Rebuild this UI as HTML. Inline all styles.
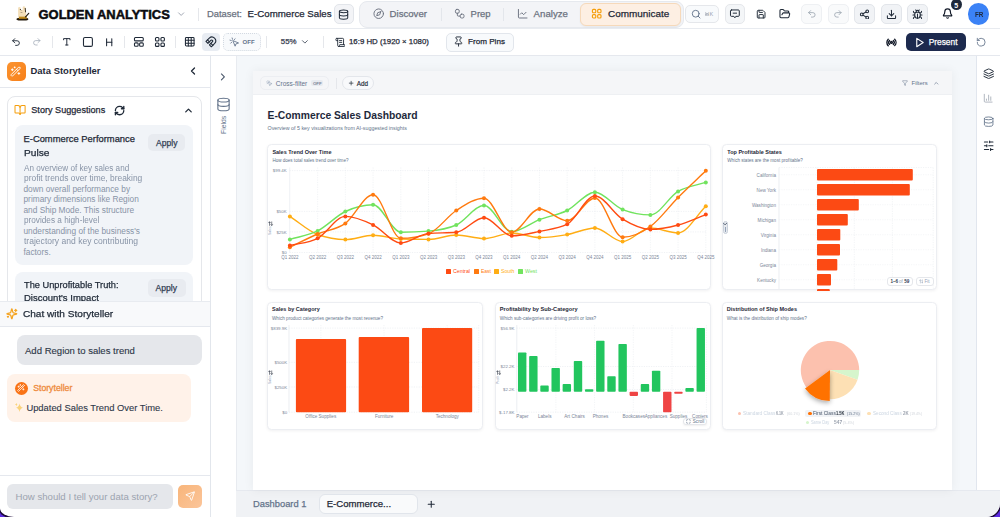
<!DOCTYPE html>
<html><head><meta charset="utf-8"><title>Golden Analytics</title>
<style>
html,body{margin:0;padding:0;}
body{width:1000px;height:517px;overflow:hidden;background:#5b2ae0;font-family:"Liberation Sans",sans-serif;position:relative;}
#app{position:absolute;left:0;top:0;width:1000px;height:517px;background:#fff;border-radius:0 0 14px 14px / 0 0 14px 9px;overflow:hidden;box-shadow:0 0 0 1.6px #1d0b3a;}
.t{position:absolute;white-space:nowrap;line-height:1;transform-origin:0 0;}
.r{position:absolute;}
</style></head><body><div id="app">
<div class="r" style="left:0.00px;top:0.00px;width:1000.00px;height:28.50px;background:#ffffff;border-radius:0px;"></div>
<div class="r" style="left:0.00px;top:28.00px;width:1000.00px;height:1.00px;background:#e8ebf0;border-radius:0px;"></div>
<div class="r" style="left:0.00px;top:55.00px;width:1000.00px;height:1.00px;background:#e5e8ee;border-radius:0px;"></div>
<div class="r" style="left:237.00px;top:56.00px;width:739.00px;height:434.00px;background:#f4f7fa;border-radius:0px;"></div>
<div class="r" style="left:975.80px;top:56.00px;width:1.40px;height:434.00px;background:#e1e6ee;border-radius:0px;"></div>
<div class="r" style="left:977.00px;top:56.00px;width:23.00px;height:434.00px;background:#ffffff;border-radius:0px;"></div>
<div class="r" style="left:210.00px;top:56.00px;width:1.00px;height:461.00px;background:#e2e6ec;border-radius:0px;"></div>
<div class="r" style="left:236.00px;top:56.00px;width:1.00px;height:461.00px;background:#e8ebf0;border-radius:0px;"></div>
<div class="r" style="left:236.00px;top:490.00px;width:764.00px;height:27.00px;background:#f0f2f5;border-radius:0px;"></div>
<div class="r" style="left:236.00px;top:490.00px;width:764.00px;height:1.00px;background:#e6e9ef;border-radius:0px;"></div>
<svg class="r" style="left:14.00px;top:4.00px;" width="17" height="18" viewBox="0 0 17 18" fill="none">
<g transform="translate(-14,-4)">
<path d="M16.3 19.2 Q16.5 18.2 18 18 L27 18 Q28.5 18.2 28.4 19.4 Q27.5 20.4 26 20.4 L18.5 20.4 Q16.8 20.3 16.3 19.2 Z" fill="#241a0c"/>
<rect x="18.8" y="16.2" width="8" height="2.6" fill="#c08a1c"/>
<path d="M18.1 16.6 L18.1 8.2 Q18.1 7.1 19.3 7.1 Q20.6 7.1 20.7 8.3 L20.8 10 L22.7 10 L22.7 7.3 Q22.8 6.3 24 6.3 Q25.3 6.4 25.5 7.6 L25.9 12.5 Q26.3 13.6 26 15 L25.6 16.6 Z" fill="#f4dfb9"/>
<path d="M20 9 L21 10.3" stroke="#2a2116" stroke-width="0.9"/>
<path d="M25.2 8 L25.6 12.3" stroke="#2a2116" stroke-width="0.9"/>
<path d="M28.7 13.3 L25.5 16.9" stroke="#2a2116" stroke-width="1.2" stroke-linecap="round"/>
<path d="M20.6 12.5 L22.4 12.5" stroke="#8a7a60" stroke-width="0.6"/>
</g>
</svg>
<div class="t" style="left:38.50px;top:8.97px;font-size:12.95686177910521px;font-weight:700;color:#0b0b0f;-webkit-text-stroke:0.5px #0b0b0f;">GOLDEN ANALYTICS</div>
<svg class="r" style="left:175.86px;top:8.86px;" width="10.29" height="10.29" viewBox="0 0 24 24" fill="none" stroke="#9ca3af" stroke-width="2.2" stroke-linecap="round" stroke-linejoin="round"><path d="m6 9 6 6 6-6"/></svg>
<div class="r" style="left:198.30px;top:8.00px;width:1.00px;height:12.50px;background:#e5e7eb;border-radius:0px;"></div>
<div class="t" style="left:207.00px;top:9.37px;font-size:9.39873284941048px;color:#6b7280;-webkit-text-stroke:0.25px #6b7280;">Dataset:</div>
<div class="t" style="left:247.60px;top:9.24px;font-size:9.690153030876548px;color:#1f2937;-webkit-text-stroke:0.25px #1f2937;">E-Commerce Sales</div>
<div class="r" style="left:333.60px;top:4.00px;width:20.00px;height:20.40px;background:#f3f4f7;border:1px solid #e2e5ea;box-sizing:border-box;border-radius:5px;"></div>
<svg class="r" style="left:338.09px;top:8.64px;" width="11.12" height="11.12" viewBox="0 0 24 24" fill="none" stroke="#1f2937" stroke-width="2.2" stroke-linecap="round" stroke-linejoin="round"><ellipse cx="12" cy="5" rx="9" ry="3"/><path d="M3 5V19A9 3 0 0 0 21 19V5"/><path d="M3 12A9 3 0 0 0 21 12"/></svg>
<div class="r" style="left:359.00px;top:1.00px;width:325.00px;height:26.50px;background:#f3f4f7;border:1px solid #e6e9ee;box-sizing:border-box;border-radius:8px;"></div>
<svg class="r" style="left:373.29px;top:8.49px;" width="11.43" height="11.43" viewBox="0 0 24 24" fill="none" stroke="#6b7280" stroke-width="2" stroke-linecap="round" stroke-linejoin="round"><circle cx="12" cy="12" r="10"/><polygon points="16.24 7.76 14.12 14.12 7.76 16.24 9.88 9.88 16.24 7.76"/></svg>
<div class="t" style="left:389.60px;top:9.27px;font-size:9.615554573574899px;color:#6b7280;-webkit-text-stroke:0.25px #6b7280;">Discover</div>
<div class="r" style="left:441.00px;top:8.00px;width:1.00px;height:12.50px;background:#e3e6eb;border-radius:0px;"></div>
<svg class="r" style="left:454.29px;top:8.49px;" width="11.43" height="11.43" viewBox="0 0 24 24" fill="none" stroke="#6b7280" stroke-width="2" stroke-linecap="round" stroke-linejoin="round"><rect width="8" height="8" x="3" y="3" rx="3"/><path d="M7 11v4a2 2 0 0 0 2 2h4"/><rect width="8" height="8" x="13" y="13" rx="3"/></svg>
<div class="t" style="left:470.60px;top:9.34px;font-size:9.468856339695222px;color:#6b7280;-webkit-text-stroke:0.25px #6b7280;">Prep</div>
<div class="r" style="left:503.40px;top:8.00px;width:1.00px;height:12.50px;background:#e3e6eb;border-radius:0px;"></div>
<svg class="r" style="left:517.29px;top:8.44px;" width="11.43" height="11.43" viewBox="0 0 24 24" fill="none" stroke="#6b7280" stroke-width="2" stroke-linecap="round" stroke-linejoin="round"><path d="M3 3v16a2 2 0 0 0 2 2h16"/><path d="m19 9-5 5-4-4-3 3"/></svg>
<div class="t" style="left:533.60px;top:9.25px;font-size:9.669711876317637px;color:#6b7280;-webkit-text-stroke:0.25px #6b7280;">Analyze</div>
<div class="r" style="left:580.40px;top:3.00px;width:100.60px;height:22.60px;background:#fdefe3;border:1px solid #f6d9ba;box-sizing:border-box;border-radius:6px;box-shadow:0 1px 2px rgba(0,0,0,0.05);"></div>
<svg class="r" style="left:591.29px;top:8.49px;" width="11.43" height="11.43" viewBox="0 0 24 24" fill="none" stroke="#f59e0b" stroke-width="2.4" stroke-linecap="round" stroke-linejoin="round"><rect width="7" height="7" x="3" y="3" rx="2"/><rect width="7" height="7" x="14" y="3" rx="2"/><rect width="7" height="7" x="14" y="14" rx="2"/><rect width="7" height="7" x="3" y="14" rx="2"/></svg>
<div class="t" style="left:608.00px;top:9.12px;font-size:9.953646242306036px;color:#1f2937;-webkit-text-stroke:0.25px #1f2937;">Communicate</div>
<div class="r" style="left:685.00px;top:5.00px;width:33.70px;height:18.40px;background:#f8fafc;border:1px solid #e5e7eb;box-sizing:border-box;border-radius:5px;"></div>
<svg class="r" style="left:690.51px;top:9.26px;" width="10.29" height="10.29" viewBox="0 0 24 24" fill="none" stroke="#64748b" stroke-width="2.2" stroke-linecap="round" stroke-linejoin="round"><circle cx="11" cy="11" r="8"/><path d="m21 21-4.3-4.3"/></svg>
<svg class="r" style="left:705.00px;top:11.60px;" width="4.4" height="4.6" viewBox="0 0 4.4 4.6" fill="none"><path d="M1.4 1.5 H3 M1.4 3.1 H3 M1.4 1.5 V3.1 M3 1.5 V3.1 M1.4 1.5 A0.8 0.8 0 1 0 0.6 2.3 H1.4 M3 1.5 A0.8 0.8 0 1 1 3.8 2.3 H3 M1.4 3.1 A0.8 0.8 0 1 1 0.6 2.3 M3 3.1 A0.8 0.8 0 1 0 3.8 2.3" stroke="#9ca3af" stroke-width="0.6"/></svg>
<div class="t" style="left:709.60px;top:11.68px;font-size:5.6px;color:#9ca3af;">K</div>
<div class="r" style="left:724.60px;top:3.60px;width:20.50px;height:20.70px;background:#f4f6f8;border:1px solid #e5e7eb;box-sizing:border-box;border-radius:5px;"></div>
<svg class="r" style="left:729.26px;top:8.21px;" width="11.77" height="11.77" viewBox="0 0 24 24" fill="none" stroke="#1f2937" stroke-width="2" stroke-linecap="round" stroke-linejoin="round"><path d="M5 4h14a2 2 0 0 1 2 2v9a2 2 0 0 1-2 2h-5l-2 3-2-3H5a2 2 0 0 1-2-2V6a2 2 0 0 1 2-2z"/><path d="M8.5 10.5h7"/></svg>
<svg class="r" style="left:756.36px;top:9.26px;" width="10.29" height="10.29" viewBox="0 0 24 24" fill="none" stroke="#1f2937" stroke-width="2.2" stroke-linecap="round" stroke-linejoin="round"><path d="M15.2 3a2 2 0 0 1 1.4.6l3.8 3.8a2 2 0 0 1 .6 1.4V19a2 2 0 0 1-2 2H5a2 2 0 0 1-2-2V5a2 2 0 0 1 2-2z"/><path d="M17 21v-7a1 1 0 0 0-1-1H8a1 1 0 0 0-1 1v7"/><path d="M7 3v4a1 1 0 0 0 1 1h7"/></svg>
<svg class="r" style="left:779.07px;top:8.47px;" width="11.66" height="11.66" viewBox="0 0 24 24" fill="none" stroke="#1f2937" stroke-width="2.2" stroke-linecap="round" stroke-linejoin="round"><path d="m6 14 1.5-2.9A2 2 0 0 1 9.24 10H20a2 2 0 0 1 1.94 2.5l-1.54 6a2 2 0 0 1-1.95 1.5H4a2 2 0 0 1-2-2V5a2 2 0 0 1 2-2h3.9a2 2 0 0 1 1.69.9l.81 1.2a2 2 0 0 0 1.67.9H18a2 2 0 0 1 2 2v2"/></svg>
<div class="r" style="left:801.40px;top:3.60px;width:20.60px;height:20.70px;background:#f9fafb;border:1px solid #eef0f3;box-sizing:border-box;border-radius:5px;"></div>
<svg class="r" style="left:806.89px;top:9.14px;" width="9.71" height="9.71" viewBox="0 0 24 24" fill="none" stroke="#9aa3af" stroke-width="2" stroke-linecap="round" stroke-linejoin="round"><path d="M9 14 4 9l5-5"/><path d="M4 9h10.5a5.5 5.5 0 0 1 5.5 5.5a5.5 5.5 0 0 1-5.5 5.5H11"/></svg>
<div class="r" style="left:827.80px;top:3.60px;width:20.90px;height:20.70px;background:#f9fafb;border:1px solid #eef0f3;box-sizing:border-box;border-radius:5px;"></div>
<svg class="r" style="left:833.39px;top:9.14px;" width="9.71" height="9.71" viewBox="0 0 24 24" fill="none" stroke="#9aa3af" stroke-width="2" stroke-linecap="round" stroke-linejoin="round"><path d="m15 14 5-5-5-5"/><path d="M20 9H9.5A5.5 5.5 0 0 0 4 14.5A5.5 5.5 0 0 0 9.5 20H13"/></svg>
<div class="r" style="left:854.20px;top:3.75px;width:21.00px;height:20.25px;background:#f1f3f6;border:1px solid #e2e5ea;box-sizing:border-box;border-radius:5px;"></div>
<svg class="r" style="left:859.21px;top:8.51px;" width="10.97" height="10.97" viewBox="0 0 24 24" fill="none" stroke="#1f2937" stroke-width="2.2" stroke-linecap="round" stroke-linejoin="round"><circle cx="18" cy="5" r="3"/><circle cx="6" cy="12" r="3"/><circle cx="18" cy="19" r="3"/><line x1="8.59" x2="15.42" y1="13.51" y2="17.49"/><line x1="15.41" x2="8.59" y1="6.51" y2="10.49"/></svg>
<div class="r" style="left:880.70px;top:3.75px;width:21.00px;height:20.25px;background:#f1f3f6;border:1px solid #e2e5ea;box-sizing:border-box;border-radius:5px;"></div>
<svg class="r" style="left:885.71px;top:8.51px;" width="10.97" height="10.97" viewBox="0 0 24 24" fill="none" stroke="#1f2937" stroke-width="2.2" stroke-linecap="round" stroke-linejoin="round"><path d="M21 15v4a2 2 0 0 1-2 2H5a2 2 0 0 1-2-2v-4"/><polyline points="7 10 12 15 17 10"/><line x1="12" x2="12" y1="15" y2="3"/></svg>
<div class="r" style="left:907.40px;top:3.75px;width:20.60px;height:20.25px;background:#f1f3f6;border:1px solid #e2e5ea;box-sizing:border-box;border-radius:5px;"></div>
<svg class="r" style="left:912.21px;top:8.51px;" width="10.97" height="10.97" viewBox="0 0 24 24" fill="none" stroke="#1f2937" stroke-width="2.2" stroke-linecap="round" stroke-linejoin="round"><path d="m8 2 1.88 1.88"/><path d="M14.12 3.88 16 2"/><path d="M9 7.13v-1a3.003 3.003 0 1 1 6 0v1"/><path d="M12 20c-3.3 0-6-2.7-6-6v-3a4 4 0 0 1 4-4h4a4 4 0 0 1 4 4v3c0 3.3-2.7 6-6 6"/><path d="M12 20v-9"/><path d="M6.53 9C4.6 8.8 3 7.1 3 5"/><path d="M6 13H2"/><path d="M3 21c0-2.1 1.7-3.9 3.8-4"/><path d="M20.97 5c0 2.1-1.6 3.8-3.5 4"/><path d="M22 13h-4"/><path d="M17.2 17c2.1.1 3.8 1.9 3.8 4"/></svg>
<svg class="r" style="left:941.50px;top:8.40px;" width="11.2" height="11.2" viewBox="0 0 24 24" fill="none" stroke="#111827" stroke-width="2.5" stroke-linecap="round" stroke-linejoin="round"><path d="M10.268 21a2 2 0 0 0 3.464 0"/><path d="M3.262 15.326A1 1 0 0 0 4 17h16a1 1 0 0 0 .74-1.673C19.41 13.956 18 12.499 18 8A6 6 0 0 0 6 8c0 4.499-1.411 5.956-2.738 7.326"/></svg>
<div class="r" style="left:950.7px;top:-0.8px;width:11px;height:11px;border-radius:50%;background:#1e293b;"></div>
<div class="t" style="left:954.25px;top:1.65px;font-size:7px;font-weight:700;color:#ffffff;">5</div>
<div class="r" style="left:968.2px;top:3.45px;width:21.2px;height:21.2px;border-radius:50%;background:#3b82f6;"></div>
<div class="t" style="left:974.60px;top:10.54px;font-size:7.9px;font-weight:700;color:#1e293b;transform:scaleX(0.7977);">FR</div>
<svg class="r" style="left:10.97px;top:37.07px;" width="10.06" height="10.06" viewBox="0 0 24 24" fill="none" stroke="#1f2937" stroke-width="2.2" stroke-linecap="round" stroke-linejoin="round"><path d="M9 14 4 9l5-5"/><path d="M4 9h10.5a5.5 5.5 0 0 1 5.5 5.5a5.5 5.5 0 0 1-5.5 5.5H11"/></svg>
<svg class="r" style="left:32.00px;top:37.30px;" width="9.6" height="9.6" viewBox="0 0 24 24" fill="none" stroke="#a3acb9" stroke-width="2" stroke-linecap="round" stroke-linejoin="round"><path d="m15 14 5-5-5-5"/><path d="M20 9H9.5A5.5 5.5 0 0 0 4 14.5A5.5 5.5 0 0 0 9.5 20H13"/></svg>
<div class="r" style="left:51.50px;top:35.80px;width:1.00px;height:12.00px;background:#e5e7eb;border-radius:0px;"></div>
<svg class="r" style="left:62.00px;top:37.10px;" width="9.6" height="9.6" viewBox="0 0 24 24" fill="none" stroke="#1f2937" stroke-width="2.4" stroke-linecap="round" stroke-linejoin="round"><polyline points="4 7 4 4 20 4 20 7"/><line x1="9" x2="15" y1="20" y2="20"/><line x1="12" x2="12" y1="4" y2="20"/></svg>
<svg class="r" style="left:82.01px;top:36.16px;" width="11.88" height="11.88" viewBox="0 0 24 24" fill="none" stroke="#1f2937" stroke-width="2.2" stroke-linecap="round" stroke-linejoin="round"><rect width="18" height="18" x="3" y="3" rx="3"/></svg>
<svg class="r" style="left:104.10px;top:36.90px;" width="10.4" height="10.4" viewBox="0 0 24 24" fill="none" stroke="#1f2937" stroke-width="2.4" stroke-linecap="round" stroke-linejoin="round"><path d="M6 12h12"/><path d="M6 20V4"/><path d="M18 20V4"/></svg>
<div class="r" style="left:123.50px;top:35.80px;width:1.00px;height:12.00px;background:#e5e7eb;border-radius:0px;"></div>
<svg class="r" style="left:133.22px;top:36.22px;" width="11.76" height="11.76" viewBox="0 0 24 24" fill="none" stroke="#1f2937" stroke-width="2.2" stroke-linecap="round" stroke-linejoin="round"><rect width="18" height="7" x="3" y="3" rx="2"/><rect width="7.5" height="7" x="3" y="14" rx="2"/><rect width="7.5" height="7" x="13.5" y="14" rx="2"/></svg>
<svg class="r" style="left:154.41px;top:36.16px;" width="11.88" height="11.88" viewBox="0 0 24 24" fill="none" stroke="#1f2937" stroke-width="2.2" stroke-linecap="round" stroke-linejoin="round"><rect width="7" height="7" x="3" y="3" rx="2"/><rect width="7" height="7" x="14" y="3" rx="2"/><rect width="7" height="7" x="14" y="14" rx="2"/><rect width="7" height="7" x="3" y="14" rx="2"/></svg>
<div class="r" style="left:175.00px;top:35.80px;width:1.00px;height:12.00px;background:#e5e7eb;border-radius:0px;"></div>
<svg class="r" style="left:184.44px;top:36.34px;" width="11.52" height="11.52" viewBox="0 0 24 24" fill="none" stroke="#1f2937" stroke-width="2.2" stroke-linecap="round" stroke-linejoin="round"><rect width="18" height="18" x="3" y="3" rx="2"/><path d="M3 9h18"/><path d="M3 15h18"/><path d="M9 3v18"/><path d="M15 3v18"/></svg>
<div class="r" style="left:202.20px;top:32.80px;width:18.00px;height:18.60px;background:#e8ecf2;border-radius:4px;"></div>
<svg class="r" style="left:205.46px;top:36.26px;" width="11.77" height="11.77" viewBox="0 0 24 24" fill="none" stroke="#1f2937" stroke-width="2.2" stroke-linecap="round" stroke-linejoin="round"><path d="m6 15-4-4 6.75-6.77a7.79 7.79 0 0 1 11 11L13 22l-4-4 6.39-6.36a2.14 2.14 0 0 0-3-3L6 15"/><path d="m5 8 4 4"/><path d="m12 15 4 4"/></svg>
<div class="r" style="left:223.20px;top:32.80px;width:37.40px;height:18.20px;background:#f8fafc;border:1px dotted #d3d9e1;box-sizing:border-box;border-radius:5px;"></div>
<svg class="r" style="left:228.94px;top:36.74px;" width="10.51" height="10.51" viewBox="0 0 24 24" fill="none" stroke="#64748b" stroke-width="2" stroke-linecap="round" stroke-linejoin="round"><path d="m9 9 5 12 1.8-5.2L21 14Z"/><path d="M7.2 2.2 8 5.1"/><path d="m5.1 8-2.9-.8"/><path d="M14 4.1 12 6"/><path d="m6 12-1.9 2"/></svg>
<div class="t" style="left:242.60px;top:39.30px;font-size:6.001875586120663px;font-weight:700;color:#64748b;">OFF</div>
<div class="r" style="left:266.40px;top:35.80px;width:1.00px;height:12.00px;background:#e5e7eb;border-radius:0px;"></div>
<div class="t" style="left:280.80px;top:38.45px;font-size:7.894449215395425px;color:#374151;-webkit-text-stroke:0.25px #374151;">55%</div>
<svg class="r" style="left:299.96px;top:36.96px;" width="9.77" height="9.77" viewBox="0 0 24 24" fill="none" stroke="#4b5563" stroke-width="2.2" stroke-linecap="round" stroke-linejoin="round"><path d="m6 9 6 6 6-6"/></svg>
<div class="r" style="left:323.10px;top:35.80px;width:1.00px;height:12.00px;background:#e5e7eb;border-radius:0px;"></div>
<svg class="r" style="left:334.58px;top:36.60px;" width="10.8" height="10.8" viewBox="0 0 24 24" fill="none" stroke="#1f2937" stroke-width="2" stroke-linecap="round" stroke-linejoin="round"><path d="M15 12h-5"/><path d="M15 8h-5"/><path d="M19 17V5a2 2 0 0 0-2-2H4"/><path d="M8 21h12a2 2 0 0 0 2-2v-1a1 1 0 0 0-1-1H11a1 1 0 0 0-1 1v1a2 2 0 1 1-4 0V5a2 2 0 1 0-4 0v2a1 1 0 0 0 1 1h3"/></svg>
<div class="t" style="left:349.00px;top:38.47px;font-size:7.842776833172495px;color:#1f2937;-webkit-text-stroke:0.25px #1f2937;">16:9 HD (1920 × 1080)</div>
<div class="r" style="left:445.50px;top:32.50px;width:68.25px;height:19.00px;background:#f8fafc;border:1px solid #e2e6ec;box-sizing:border-box;border-radius:5px;"></div>
<svg class="r" style="left:453.31px;top:36.46px;" width="11.09" height="11.09" viewBox="0 0 24 24" fill="none" stroke="#1f2937" stroke-width="2" stroke-linecap="round" stroke-linejoin="round"><path d="M12 17v5"/><path d="M9 10.76a2 2 0 0 1-1.11 1.79l-1.78.9A2 2 0 0 0 5 15.24V16a1 1 0 0 0 1 1h12a1 1 0 0 0 1-1v-.76a2 2 0 0 0-1.11-1.79l-1.78-.9A2 2 0 0 1 15 10.76V7a1 1 0 0 1 1-1 2 2 0 0 0 0-4H8a2 2 0 0 0 0 4 1 1 0 0 1 1 1z"/></svg>
<div class="t" style="left:468.00px;top:38.35px;font-size:8.121270320323754px;color:#1f2937;-webkit-text-stroke:0.25px #1f2937;">From Pins</div>
<svg class="r" style="left:886.45px;top:36.60px;" width="10.91" height="10.91" viewBox="0 0 24 24" fill="none" stroke="#111827" stroke-width="3" stroke-linecap="round" stroke-linejoin="round"><path d="M4.9 19.1C1 15.2 1 8.8 4.9 4.9"/><path d="M7.8 16.2c-2.3-2.3-2.3-6.1 0-8.5"/><circle cx="12" cy="12" r="2"/><path d="M16.2 7.8c2.3 2.3 2.3 6.1 0 8.5"/><path d="M19.1 4.9C23 8.8 23 15.1 19.1 19"/></svg>
<div class="r" style="left:906.25px;top:33.00px;width:59.35px;height:18.10px;background:#1d2a4e;border-radius:5px;"></div>
<svg class="r" style="left:914.27px;top:36.85px;" width="11.05" height="11.05" viewBox="0 0 24 24" fill="none" stroke="#ffffff" stroke-width="2.4" stroke-linecap="round" stroke-linejoin="round"><polygon points="6 3 20 12 6 21 6 3"/></svg>
<div class="t" style="left:928.75px;top:38.25px;font-size:8.342779415098617px;color:#ffffff;-webkit-text-stroke:0.25px #ffffff;">Present</div>
<svg class="r" style="left:976.25px;top:37.05px;" width="10.4" height="10.4" viewBox="0 0 24 24" fill="none" stroke="#64748b" stroke-width="2" stroke-linecap="round" stroke-linejoin="round"><path d="M3 12a9 9 0 1 0 9-9 9.75 9.75 0 0 0-6.74 2.74L3 8"/><path d="M3 3v5h5"/></svg>
<div class="r" style="left:0.00px;top:86.50px;width:210.00px;height:1.00px;background:#e5e8ee;border-radius:0px;"></div>
<div class="r" style="left:6.5px;top:61.8px;width:19px;height:19px;border-radius:5px;background:linear-gradient(135deg,#fb9330,#f7801a);"></div>
<svg class="r" style="left:10.30px;top:65.60px;" width="11.2" height="11.2" viewBox="0 0 24 24" fill="none" stroke="#ffffff" stroke-width="2" stroke-linecap="round" stroke-linejoin="round"><path d="m21.64 3.64-1.28-1.28a1.21 1.21 0 0 0-1.72 0L2.36 18.64a1.21 1.21 0 0 0 0 1.72l1.28 1.280a1.2 1.2 0 0 0 1.72 0L21.64 5.36a1.2 1.2 0 0 0 0-1.72"/><path d="m14 7 3 3"/><path d="M5 6v4"/><path d="M19 14v4"/><path d="M10 2v2"/><path d="M7 8H3"/><path d="M21 16h-4"/><path d="M11 3H9"/></svg>
<div class="t" style="left:30.50px;top:66.04px;font-size:9.470657872484356px;font-weight:700;color:#1f2937;">Data Storyteller</div>
<svg class="r" style="left:187.00px;top:65.20px;" width="12.0" height="12.0" viewBox="0 0 24 24" fill="none" stroke="#1f2937" stroke-width="2.6" stroke-linecap="round" stroke-linejoin="round"><path d="m15 18-6-6 6-6"/></svg>
<div class="r" style="left:0;top:87.5px;width:210px;height:214px;overflow:hidden;">
<div class="r" style="left:0;top:-87.5px;width:210px;height:400px;">
<div class="r" style="left:6.50px;top:95.50px;width:195.00px;height:324.50px;background:#ffffff;border:1px solid #e5e7eb;box-sizing:border-box;border-radius:8px;"></div>
<svg class="r" style="left:14.24px;top:104.44px;" width="12.11" height="12.11" viewBox="0 0 24 24" fill="none" stroke="#f59e0b" stroke-width="2" stroke-linecap="round" stroke-linejoin="round"><path d="M12 7v14"/><path d="M3 18a1 1 0 0 1-1-1V4a1 1 0 0 1 1-1h5a4 4 0 0 1 4 4 4 4 0 0 1 4-4h5a1 1 0 0 1 1 1v13a1 1 0 0 1-1 1h-6a3 3 0 0 0-3 3 3 3 0 0 0-3-3z"/></svg>
<div class="t" style="left:31.30px;top:106.30px;font-size:9.118564442219569px;color:#1f2937;-webkit-text-stroke:0.25px #1f2937;">Story Suggestions</div>
<svg class="r" style="left:114.30px;top:104.90px;" width="11.2" height="11.2" viewBox="0 0 24 24" fill="none" stroke="#1f2937" stroke-width="2.9" stroke-linecap="round" stroke-linejoin="round"><path d="M3 12a9 9 0 0 1 9-9 9.75 9.75 0 0 1 6.74 2.74L21 8"/><path d="M21 3v5h-5"/><path d="M21 12a9 9 0 0 1-9 9 9.75 9.75 0 0 1-6.74-2.74L3 16"/><path d="M8 16H3v5"/></svg>
<svg class="r" style="left:182.51px;top:104.71px;" width="10.97" height="10.97" viewBox="0 0 24 24" fill="none" stroke="#1f2937" stroke-width="2.8" stroke-linecap="round" stroke-linejoin="round"><path d="m18 15-6-6-6 6"/></svg>
<div class="r" style="left:15.00px;top:125.00px;width:178.20px;height:139.50px;background:#f1f4f8;border-radius:8px;"></div>
<div class="t" style="left:23.50px;top:134.47px;font-size:9.4px;color:#1f2937;-webkit-text-stroke:0.25px #1f2937;">E-Commerce Performance</div>
<div class="t" style="left:23.50px;top:147.67px;font-size:9.4px;color:#1f2937;transform:scaleX(1.0845);-webkit-text-stroke:0.25px #1f2937;">Pulse</div>
<div class="r" style="left:148.30px;top:133.80px;width:36.60px;height:17.20px;background:#e8ebf0;border-radius:5px;"></div>
<div class="t" style="left:156.00px;top:138.53px;font-size:8.595165219563995px;color:#334155;-webkit-text-stroke:0.25px #334155;">Apply</div>
<div class="t" style="left:23.50px;top:163.66px;font-size:8.3px;color:#8793a6;transform:scaleX(0.9787);">An overview of key sales and</div>
<div class="t" style="left:23.50px;top:174.19px;font-size:8.3px;color:#8793a6;transform:scaleX(1.0137);">profit trends over time, breaking</div>
<div class="t" style="left:23.50px;top:184.70px;font-size:8.3px;color:#8793a6;">down overall performance by</div>
<div class="t" style="left:23.50px;top:195.22px;font-size:8.3px;color:#8793a6;">primary dimensions like Region</div>
<div class="t" style="left:23.50px;top:205.75px;font-size:8.3px;color:#8793a6;">and Ship Mode. This structure</div>
<div class="t" style="left:23.50px;top:216.26px;font-size:8.3px;color:#8793a6;transform:scaleX(0.9892);">provides a high-level</div>
<div class="t" style="left:23.50px;top:226.78px;font-size:8.3px;color:#8793a6;">understanding of the business's</div>
<div class="t" style="left:23.50px;top:237.31px;font-size:8.3px;color:#8793a6;transform:scaleX(1.0297);">trajectory and key contributing</div>
<div class="t" style="left:23.50px;top:247.82px;font-size:8.3px;color:#8793a6;">factors.</div>
<div class="r" style="left:15.00px;top:271.60px;width:178.20px;height:128.40px;background:#f1f4f8;border-radius:8px;"></div>
<div class="t" style="left:23.60px;top:279.77px;font-size:9.4px;color:#1f2937;transform:scaleX(0.9862);-webkit-text-stroke:0.25px #1f2937;">The Unprofitable Truth:</div>
<div class="t" style="left:23.60px;top:292.87px;font-size:9.4px;color:#1f2937;transform:scaleX(1.0151);-webkit-text-stroke:0.25px #1f2937;">Discount's Impact</div>
<div class="r" style="left:147.70px;top:279.00px;width:37.90px;height:18.00px;background:#e8ebf0;border-radius:5px;"></div>
<div class="t" style="left:155.50px;top:284.13px;font-size:8.595165219563995px;color:#334155;-webkit-text-stroke:0.25px #334155;">Apply</div>
</div></div>
<div class="r" style="left:0.00px;top:301.40px;width:210.00px;height:24.60px;background:#f8f9fb;border-radius:0px;"></div>
<div class="r" style="left:0.00px;top:301.40px;width:210.00px;height:0.80px;background:#e8ebf0;border-radius:0px;"></div>
<div class="r" style="left:0.00px;top:325.50px;width:210.00px;height:1.00px;background:#e5e8ee;border-radius:0px;"></div>
<svg class="r" style="left:6.17px;top:308.12px;" width="11.66" height="11.66" viewBox="0 0 24 24" fill="none" stroke="#f5a524" stroke-width="2.6" stroke-linecap="round" stroke-linejoin="round"><path d="M9.937 15.5A2 2 0 0 0 8.5 14.063l-6.135-1.582a.5.5 0 0 1 0-.962L8.5 9.936A2 2 0 0 0 9.937 8.5l1.582-6.135a.5.5 0 0 1 .963 0L14.063 8.5A2 2 0 0 0 15.5 9.937l6.135 1.581a.5.5 0 0 1 0 .964L15.5 14.063a2 2 0 0 0-1.437 1.437l-1.582 6.135a.5.5 0 0 1-.963 0z"/><path d="M20 3v4"/><path d="M22 5h-4"/><path d="M4 17v2"/><path d="M5 18H3"/></svg>
<div class="t" style="left:22.50px;top:309.18px;font-size:9.6px;color:#1f2937;transform:scaleX(1.0478);-webkit-text-stroke:0.25px #1f2937;">Chat with Storyteller</div>
<div class="r" style="left:17.10px;top:334.70px;width:184.80px;height:30.70px;background:#e5e7eb;border-radius:8px;"></div>
<div class="t" style="left:25.00px;top:345.50px;font-size:9.559762092284295px;color:#2d3748;-webkit-text-stroke:0.12px #2d3748;">Add Region to sales trend</div>
<div class="r" style="left:6.80px;top:373.70px;width:184.20px;height:48.80px;background:#fff2e9;border-radius:8px;"></div>
<div class="r" style="left:14.7px;top:381.7px;width:13px;height:13px;border-radius:50%;background:#f97316;"></div>
<svg class="r" style="left:17.20px;top:384.20px;" width="8.0" height="8.0" viewBox="0 0 24 24" fill="none" stroke="#ffffff" stroke-width="2.2" stroke-linecap="round" stroke-linejoin="round"><path d="m21.64 3.64-1.28-1.28a1.21 1.21 0 0 0-1.72 0L2.36 18.64a1.21 1.21 0 0 0 0 1.72l1.28 1.280a1.2 1.2 0 0 0 1.72 0L21.64 5.36a1.2 1.2 0 0 0 0-1.72"/><path d="m14 7 3 3"/><path d="M5 6v4"/><path d="M19 14v4"/><path d="M10 2v2"/><path d="M7 8H3"/><path d="M21 16h-4"/><path d="M11 3H9"/></svg>
<div class="t" style="left:33.20px;top:384.08px;font-size:8.70869202999167px;color:#ee8a3c;-webkit-text-stroke:0.3px #ee8a3c;">Storyteller</div>
<svg class="r" style="left:14.00px;top:402.00px;" width="10" height="11" viewBox="0 0 10 11" fill="none"><path d="M5.5 1.5 Q6 5 9 5.8 Q6 6.6 5.5 10 Q5 6.6 2 5.8 Q5 5 5.5 1.5Z" fill="#f9d27a"/><path d="M2.3 0.8 Q2.5 2.2 3.6 2.5 Q2.5 2.8 2.3 4.2 Q2.1 2.8 1 2.5 Q2.1 2.2 2.3 0.8Z" fill="#f9d27a"/></svg>
<div class="t" style="left:26.40px;top:403.37px;font-size:9.40833100843402px;color:#2d3748;-webkit-text-stroke:0.1px #2d3748;">Updated Sales Trend Over Time.</div>
<div class="r" style="left:0.00px;top:474.50px;width:210.00px;height:1.00px;background:#e5e8ee;border-radius:0px;"></div>
<div class="r" style="left:6.75px;top:484.25px;width:165.75px;height:24.50px;background:#e5e7eb;border-radius:6px;"></div>
<div class="t" style="left:15.50px;top:491.98px;font-size:9.604836237964891px;color:#9ca3af;">How should I tell your data story?</div>
<div class="r" style="left:178px;top:484.5px;width:24px;height:23.8px;border-radius:5px;background:linear-gradient(135deg,#f8b57a,#fbc59a);"></div>
<svg class="r" style="left:184.86px;top:490.86px;" width="10.29" height="10.29" viewBox="0 0 24 24" fill="none" stroke="#ffffff" stroke-width="2" stroke-linecap="round" stroke-linejoin="round"><path d="M14.536 21.686a.5.5 0 0 0 .937-.024l6.5-19a.496.496 0 0 0-.635-.635l-19 6.5a.5.5 0 0 0-.024.937l7.93 3.18a2 2 0 0 1 1.112 1.11z"/><path d="m21.854 2.147-10.94 10.939"/></svg>
<svg class="r" style="left:217.45px;top:70.95px;" width="11.8" height="11.8" viewBox="0 0 24 24" fill="none" stroke="#475569" stroke-width="2.2" stroke-linecap="round" stroke-linejoin="round"><path d="m9 18 6-6-6-6"/></svg>
<svg class="r" style="left:215.98px;top:96.73px;" width="15.03" height="15.03" viewBox="0 0 24 24" fill="none" stroke="#64748b" stroke-width="1.8" stroke-linecap="round" stroke-linejoin="round"><ellipse cx="12" cy="5" rx="9" ry="3"/><path d="M3 5V19A9 3 0 0 0 21 19V5"/><path d="M3 12A9 3 0 0 0 21 12"/></svg>
<div class="t" style="left:220.8px;top:134px;font-size:6.8px;color:#64748b;transform:rotate(-90deg) scaleX(1.0);transform-origin:0 0;">Fields</div>
<svg class="r" style="left:982.99px;top:68.39px;" width="11.43" height="11.43" viewBox="0 0 24 24" fill="none" stroke="#1f2937" stroke-width="2" stroke-linecap="round" stroke-linejoin="round"><path d="m12.83 2.18a2 2 0 0 0-1.66 0L2.6 6.08a1 1 0 0 0 0 1.83l8.58 3.91a2 2 0 0 0 1.66 0l8.58-3.9a1 1 0 0 0 0-1.83Z"/><path d="m22 17.65-9.17 4.16a2 2 0 0 1-1.66 0L2 17.65"/><path d="m22 12.65-9.17 4.16a2 2 0 0 1-1.66 0L2 12.65"/></svg>
<svg class="r" style="left:982.95px;top:92.55px;" width="10.4" height="10.4" viewBox="0 0 24 24" fill="none" stroke="#9ca3af" stroke-width="1.8" stroke-linecap="round" stroke-linejoin="round"><path d="M3 3v16a2 2 0 0 0 2 2h16"/><path d="M18 17V9"/><path d="M13 17V5"/><path d="M8 17v-3"/></svg>
<svg class="r" style="left:982.57px;top:116.22px;" width="11.37" height="11.37" viewBox="0 0 24 24" fill="none" stroke="#64748b" stroke-width="1.8" stroke-linecap="round" stroke-linejoin="round"><ellipse cx="12" cy="5" rx="9" ry="3"/><path d="M3 5V19A9 3 0 0 0 21 19V5"/><path d="M3 12A9 3 0 0 0 21 12"/></svg>
<svg class="r" style="left:982.75px;top:140.15px;" width="11.4" height="11.4" viewBox="0 0 24 24" fill="none" stroke="#1f2937" stroke-width="2.2" stroke-linecap="round" stroke-linejoin="round"><line x1="21" x2="14" y1="4" y2="4"/><line x1="10" x2="3" y1="4" y2="4"/><line x1="21" x2="12" y1="12" y2="12"/><line x1="8" x2="3" y1="12" y2="12"/><line x1="21" x2="16" y1="20" y2="20"/><line x1="12" x2="3" y1="20" y2="20"/><line x1="14" x2="14" y1="2" y2="6"/><line x1="8" x2="8" y1="10" y2="14"/><line x1="16" x2="16" y1="18" y2="22"/></svg>
<div class="r" style="left:252.60px;top:71.00px;width:699.40px;height:419.00px;background:#ffffff;border-radius:0px;box-shadow:0 0 10px rgba(15,23,42,0.06);"></div>
<div class="r" style="left:252.60px;top:71.00px;width:699.40px;height:23.50px;background:#f5f6f8;border-radius:0px;"></div>
<div class="r" style="left:252.60px;top:94.00px;width:699.40px;height:0.80px;background:#eef0f3;border-radius:0px;"></div>
<div class="r" style="left:260.20px;top:76.20px;width:69.30px;height:13.50px;background:#f5f6f8;border:1px solid #eceef2;box-sizing:border-box;border-radius:5px;"></div>
<svg class="r" style="left:266.09px;top:79.74px;" width="6.51" height="6.51" viewBox="0 0 24 24" fill="none" stroke="#94a3b8" stroke-width="2.2" stroke-linecap="round" stroke-linejoin="round"><path d="m9 9 5 12 1.8-5.2L21 14Z"/><path d="M7.2 2.2 8 5.1"/><path d="m5.1 8-2.9-.8"/><path d="M14 4.1 12 6"/><path d="m6 12-1.9 2"/></svg>
<div class="t" style="left:275.80px;top:80.57px;font-size:6.517311608961303px;color:#64748b;">Cross-filter</div>
<div class="r" style="left:311.20px;top:80.00px;width:12.30px;height:6.20px;background:#e8ebf0;border-radius:2px;"></div>
<div class="t" style="left:312.90px;top:81.72px;font-size:4.40137542982182px;font-weight:700;color:#7b8698;">OFF</div>
<div class="r" style="left:335.50px;top:78.00px;width:0.80px;height:10.50px;background:#e5e7eb;border-radius:0px;"></div>
<div class="r" style="left:342.20px;top:75.50px;width:31.90px;height:14.20px;background:#f8f9fb;border:1px solid #e3e6eb;box-sizing:border-box;border-radius:7.5px;"></div>
<svg class="r" style="left:347.95px;top:79.55px;" width="6.3" height="6.3" viewBox="0 0 24 24" fill="none" stroke="#1f2937" stroke-width="2.6" stroke-linecap="round" stroke-linejoin="round"><path d="M5 12h14"/><path d="M12 5v14"/></svg>
<div class="t" style="left:356.70px;top:80.64px;font-size:6.351102134012471px;color:#1f2937;-webkit-text-stroke:0.15px #1f2937;">Add</div>
<svg class="r" style="left:902.03px;top:80.03px;" width="5.94" height="5.94" viewBox="0 0 24 24" fill="none" stroke="#64748b" stroke-width="2" stroke-linecap="round" stroke-linejoin="round"><path d="M10 20a1 1 0 0 0 .553.895l2 1A1 1 0 0 0 14 21v-7a2 2 0 0 1 .517-1.341L21.74 4.67A1 1 0 0 0 21 3H3a1 1 0 0 0-.742 1.67l7.225 7.989A2 2 0 0 1 10 14z"/></svg>
<div class="t" style="left:911.60px;top:80.72px;font-size:5.951437919752024px;color:#64748b;">Filters</div>
<svg class="r" style="left:933.14px;top:79.74px;" width="6.51" height="6.51" viewBox="0 0 24 24" fill="none" stroke="#64748b" stroke-width="2.4" stroke-linecap="round" stroke-linejoin="round"><path d="m18 15-6-6-6 6"/></svg>
<div class="t" style="left:267.50px;top:110.95px;font-size:10.322469872407098px;font-weight:700;color:#1e293b;">E-Commerce Sales Dashboard</div>
<div class="t" style="left:267.50px;top:125.90px;font-size:5.3254550652816155px;color:#64748b;">Overview of 5 key visualizations from AI-suggested insights</div>
<div class="r" style="left:267.20px;top:144.40px;width:443.40px;height:145.20px;background:#ffffff;border:1px solid #eceef2;box-sizing:border-box;border-radius:4.5px;box-shadow:0 1px 3px rgba(15,23,42,0.06);"></div>
<div class="t" style="left:272.40px;top:150.13px;font-size:5.499782261576426px;font-weight:700;color:#1f2937;">Sales Trend Over Time</div>
<div class="t" style="left:272.40px;top:159.44px;font-size:4.566817349721672px;color:#64748b;">How does total sales trend over time?</div>
<svg class="r" style="left:268px;top:165px" width="442" height="91" viewBox="268 165 442 91" fill="none"><line x1="289.5" y1="170.6" x2="706" y2="170.6" stroke="#e6e9ee" stroke-width="0.6" stroke-dasharray="1.2 1.2"/><line x1="289.5" y1="211.4" x2="706" y2="211.4" stroke="#e6e9ee" stroke-width="0.6" stroke-dasharray="1.2 1.2"/><line x1="289.5" y1="231.9" x2="706" y2="231.9" stroke="#e6e9ee" stroke-width="0.6" stroke-dasharray="1.2 1.2"/><line x1="289.5" y1="252.5" x2="706" y2="252.5" stroke="#e6e9ee" stroke-width="0.6" stroke-dasharray="1.2 1.2"/><line x1="317.63" y1="167.5" x2="317.63" y2="252.5" stroke="#e9ecf0" stroke-width="0.6" stroke-dasharray="1.2 1.2"/><line x1="345.35" y1="167.5" x2="345.35" y2="252.5" stroke="#e9ecf0" stroke-width="0.6" stroke-dasharray="1.2 1.2"/><line x1="373.08" y1="167.5" x2="373.08" y2="252.5" stroke="#e9ecf0" stroke-width="0.6" stroke-dasharray="1.2 1.2"/><line x1="400.81" y1="167.5" x2="400.81" y2="252.5" stroke="#e9ecf0" stroke-width="0.6" stroke-dasharray="1.2 1.2"/><line x1="428.53" y1="167.5" x2="428.53" y2="252.5" stroke="#e9ecf0" stroke-width="0.6" stroke-dasharray="1.2 1.2"/><line x1="456.26" y1="167.5" x2="456.26" y2="252.5" stroke="#e9ecf0" stroke-width="0.6" stroke-dasharray="1.2 1.2"/><line x1="483.99" y1="167.5" x2="483.99" y2="252.5" stroke="#e9ecf0" stroke-width="0.6" stroke-dasharray="1.2 1.2"/><line x1="511.72" y1="167.5" x2="511.72" y2="252.5" stroke="#e9ecf0" stroke-width="0.6" stroke-dasharray="1.2 1.2"/><line x1="539.44" y1="167.5" x2="539.44" y2="252.5" stroke="#e9ecf0" stroke-width="0.6" stroke-dasharray="1.2 1.2"/><line x1="567.17" y1="167.5" x2="567.17" y2="252.5" stroke="#e9ecf0" stroke-width="0.6" stroke-dasharray="1.2 1.2"/><line x1="594.90" y1="167.5" x2="594.90" y2="252.5" stroke="#e9ecf0" stroke-width="0.6" stroke-dasharray="1.2 1.2"/><line x1="622.62" y1="167.5" x2="622.62" y2="252.5" stroke="#e9ecf0" stroke-width="0.6" stroke-dasharray="1.2 1.2"/><line x1="650.35" y1="167.5" x2="650.35" y2="252.5" stroke="#e9ecf0" stroke-width="0.6" stroke-dasharray="1.2 1.2"/><line x1="678.08" y1="167.5" x2="678.08" y2="252.5" stroke="#e9ecf0" stroke-width="0.6" stroke-dasharray="1.2 1.2"/><line x1="705.81" y1="167.5" x2="705.81" y2="252.5" stroke="#e9ecf0" stroke-width="0.6" stroke-dasharray="1.2 1.2"/><line x1="289.7" y1="167.5" x2="289.7" y2="252.5" stroke="#e8ebf0" stroke-width="0.7"/><path d="M289.90,216.40C299.14,222.43 308.38,231.10 317.63,234.50C326.87,237.90 336.11,239.60 345.35,239.60C354.60,239.60 363.84,235.30 373.08,235.30C382.32,235.30 391.57,238.73 400.81,239.00C410.05,239.27 419.29,239.40 428.53,239.40C437.78,239.40 447.02,235.00 456.26,235.00C465.50,235.00 474.75,238.60 483.99,238.60C493.23,238.60 502.47,233.00 511.72,233.00C520.96,233.00 530.20,237.50 539.44,237.50C548.69,237.50 557.93,236.18 567.17,234.60C576.41,233.02 585.65,228.00 594.90,228.00C604.14,228.00 613.38,241.60 622.62,241.60C631.87,241.60 641.11,228.00 650.35,228.00C659.59,228.00 668.84,232.90 678.08,232.90C687.32,232.90 696.56,215.10 705.81,206.20" stroke="#ffad14" stroke-width="1.4"/><circle cx="289.90" cy="216.40" r="2" fill="#ffad14"/><circle cx="317.63" cy="234.50" r="2" fill="#ffad14"/><circle cx="345.35" cy="239.60" r="2" fill="#ffad14"/><circle cx="373.08" cy="235.30" r="2" fill="#ffad14"/><circle cx="400.81" cy="239.00" r="2" fill="#ffad14"/><circle cx="428.53" cy="239.40" r="2" fill="#ffad14"/><circle cx="456.26" cy="235.00" r="2" fill="#ffad14"/><circle cx="483.99" cy="238.60" r="2" fill="#ffad14"/><circle cx="511.72" cy="233.00" r="2" fill="#ffad14"/><circle cx="539.44" cy="237.50" r="2" fill="#ffad14"/><circle cx="567.17" cy="234.60" r="2" fill="#ffad14"/><circle cx="594.90" cy="228.00" r="2" fill="#ffad14"/><circle cx="622.62" cy="241.60" r="2" fill="#ffad14"/><circle cx="650.35" cy="228.00" r="2" fill="#ffad14"/><circle cx="678.08" cy="232.90" r="2" fill="#ffad14"/><circle cx="705.81" cy="206.20" r="2" fill="#ffad14"/><path d="M289.90,239.40C299.14,236.57 308.38,235.55 317.63,230.90C326.87,226.25 336.11,215.87 345.35,211.50C354.60,207.13 363.84,204.70 373.08,204.70C382.32,204.70 391.57,232.20 400.81,232.20C410.05,232.20 419.29,231.83 428.53,231.10C437.78,230.37 447.02,229.07 456.26,225.00C465.50,220.93 474.75,205.40 483.99,205.40C493.23,205.40 502.47,231.70 511.72,231.70C520.96,231.70 530.20,223.23 539.44,219.70C548.69,216.17 557.93,215.08 567.17,210.50C576.41,205.92 585.65,192.20 594.90,192.20C604.14,192.20 613.38,206.07 622.62,209.60C631.87,213.13 641.11,214.90 650.35,214.90C659.59,214.90 668.84,196.82 678.08,191.40C687.32,185.98 696.56,185.40 705.81,182.40" stroke="#71e35e" stroke-width="1.4"/><circle cx="289.90" cy="239.40" r="2" fill="#71e35e"/><circle cx="317.63" cy="230.90" r="2" fill="#71e35e"/><circle cx="345.35" cy="211.50" r="2" fill="#71e35e"/><circle cx="373.08" cy="204.70" r="2" fill="#71e35e"/><circle cx="400.81" cy="232.20" r="2" fill="#71e35e"/><circle cx="428.53" cy="231.10" r="2" fill="#71e35e"/><circle cx="456.26" cy="225.00" r="2" fill="#71e35e"/><circle cx="483.99" cy="205.40" r="2" fill="#71e35e"/><circle cx="511.72" cy="231.70" r="2" fill="#71e35e"/><circle cx="539.44" cy="219.70" r="2" fill="#71e35e"/><circle cx="567.17" cy="210.50" r="2" fill="#71e35e"/><circle cx="594.90" cy="192.20" r="2" fill="#71e35e"/><circle cx="622.62" cy="209.60" r="2" fill="#71e35e"/><circle cx="650.35" cy="214.90" r="2" fill="#71e35e"/><circle cx="678.08" cy="191.40" r="2" fill="#71e35e"/><circle cx="705.81" cy="182.40" r="2" fill="#71e35e"/><path d="M289.90,247.20C299.14,242.80 308.38,237.97 317.63,234.00C326.87,230.03 336.11,229.95 345.35,223.40C354.60,216.85 363.84,194.70 373.08,194.70C382.32,194.70 391.57,238.30 400.81,238.30C410.05,238.30 419.29,236.80 428.53,233.80C437.78,230.80 447.02,216.43 456.26,210.50C465.50,204.57 474.75,198.20 483.99,198.20C493.23,198.20 502.47,232.20 511.72,232.20C520.96,232.20 530.20,209.00 539.44,209.00C548.69,209.00 557.93,220.70 567.17,220.70C576.41,220.70 585.65,198.00 594.90,198.00C604.14,198.00 613.38,237.20 622.62,237.20C631.87,237.20 641.11,233.12 650.35,226.50C659.59,219.88 668.84,206.78 678.08,197.50C687.32,188.22 696.56,179.70 705.81,170.80" stroke="#ff7a0f" stroke-width="1.4"/><circle cx="289.90" cy="247.20" r="2" fill="#ff7a0f"/><circle cx="317.63" cy="234.00" r="2" fill="#ff7a0f"/><circle cx="345.35" cy="223.40" r="2" fill="#ff7a0f"/><circle cx="373.08" cy="194.70" r="2" fill="#ff7a0f"/><circle cx="400.81" cy="238.30" r="2" fill="#ff7a0f"/><circle cx="428.53" cy="233.80" r="2" fill="#ff7a0f"/><circle cx="456.26" cy="210.50" r="2" fill="#ff7a0f"/><circle cx="483.99" cy="198.20" r="2" fill="#ff7a0f"/><circle cx="511.72" cy="232.20" r="2" fill="#ff7a0f"/><circle cx="539.44" cy="209.00" r="2" fill="#ff7a0f"/><circle cx="567.17" cy="220.70" r="2" fill="#ff7a0f"/><circle cx="594.90" cy="198.00" r="2" fill="#ff7a0f"/><circle cx="622.62" cy="237.20" r="2" fill="#ff7a0f"/><circle cx="650.35" cy="226.50" r="2" fill="#ff7a0f"/><circle cx="678.08" cy="197.50" r="2" fill="#ff7a0f"/><circle cx="705.81" cy="170.80" r="2" fill="#ff7a0f"/><path d="M289.90,245.50C299.14,243.10 308.38,243.10 317.63,238.30C326.87,233.50 336.11,216.40 345.35,216.40C354.60,216.40 363.84,220.47 373.08,224.90C382.32,229.33 391.57,243.00 400.81,243.00C410.05,243.00 419.29,234.13 428.53,233.40C437.78,232.67 447.02,233.03 456.26,232.30C465.50,231.57 474.75,217.70 483.99,217.70C493.23,217.70 502.47,235.80 511.72,235.80C520.96,235.80 530.20,233.33 539.44,231.40C548.69,229.47 557.93,229.00 567.17,224.20C576.41,219.40 585.65,196.00 594.90,196.00C604.14,196.00 613.38,213.63 622.62,219.20C631.87,224.77 641.11,229.40 650.35,229.40C659.59,229.40 668.84,227.47 678.08,225.00C687.32,222.53 696.56,218.07 705.81,214.60" stroke="#ff4b12" stroke-width="1.4"/><circle cx="289.90" cy="245.50" r="2" fill="#ff4b12"/><circle cx="317.63" cy="238.30" r="2" fill="#ff4b12"/><circle cx="345.35" cy="216.40" r="2" fill="#ff4b12"/><circle cx="373.08" cy="224.90" r="2" fill="#ff4b12"/><circle cx="400.81" cy="243.00" r="2" fill="#ff4b12"/><circle cx="428.53" cy="233.40" r="2" fill="#ff4b12"/><circle cx="456.26" cy="232.30" r="2" fill="#ff4b12"/><circle cx="483.99" cy="217.70" r="2" fill="#ff4b12"/><circle cx="511.72" cy="235.80" r="2" fill="#ff4b12"/><circle cx="539.44" cy="231.40" r="2" fill="#ff4b12"/><circle cx="567.17" cy="224.20" r="2" fill="#ff4b12"/><circle cx="594.90" cy="196.00" r="2" fill="#ff4b12"/><circle cx="622.62" cy="219.20" r="2" fill="#ff4b12"/><circle cx="650.35" cy="229.40" r="2" fill="#ff4b12"/><circle cx="678.08" cy="225.00" r="2" fill="#ff4b12"/><circle cx="705.81" cy="214.60" r="2" fill="#ff4b12"/></svg>
<div class="t" style="left:272.76px;top:168.82px;font-size:4.4px;color:#7b8698;">$99.4K</div>
<div class="t" style="left:276.42px;top:210.22px;font-size:4.4px;color:#7b8698;">$50K</div>
<div class="t" style="left:276.42px;top:230.62px;font-size:4.4px;color:#7b8698;">$25K</div>
<div class="t" style="left:281.81px;top:250.72px;font-size:4.4px;color:#7b8698;">$0</div>
<div class="t" style="left:281.27px;top:256.18px;font-size:4.5px;color:#7b8698;">Q1 2022</div>
<div class="t" style="left:309.00px;top:256.18px;font-size:4.5px;color:#7b8698;">Q2 2022</div>
<div class="t" style="left:336.72px;top:256.18px;font-size:4.5px;color:#7b8698;">Q3 2022</div>
<div class="t" style="left:364.45px;top:256.18px;font-size:4.5px;color:#7b8698;">Q4 2022</div>
<div class="t" style="left:392.18px;top:256.18px;font-size:4.5px;color:#7b8698;">Q1 2023</div>
<div class="t" style="left:419.90px;top:256.18px;font-size:4.5px;color:#7b8698;">Q2 2023</div>
<div class="t" style="left:447.63px;top:256.18px;font-size:4.5px;color:#7b8698;">Q3 2023</div>
<div class="t" style="left:475.36px;top:256.18px;font-size:4.5px;color:#7b8698;">Q4 2023</div>
<div class="t" style="left:503.08px;top:256.18px;font-size:4.5px;color:#7b8698;">Q1 2024</div>
<div class="t" style="left:530.81px;top:256.18px;font-size:4.5px;color:#7b8698;">Q2 2024</div>
<div class="t" style="left:558.54px;top:256.18px;font-size:4.5px;color:#7b8698;">Q3 2024</div>
<div class="t" style="left:586.27px;top:256.18px;font-size:4.5px;color:#7b8698;">Q4 2024</div>
<div class="t" style="left:613.99px;top:256.18px;font-size:4.5px;color:#7b8698;">Q1 2025</div>
<div class="t" style="left:641.72px;top:256.18px;font-size:4.5px;color:#7b8698;">Q2 2025</div>
<div class="t" style="left:669.45px;top:256.18px;font-size:4.5px;color:#7b8698;">Q3 2025</div>
<div class="t" style="left:697.17px;top:256.18px;font-size:4.5px;color:#7b8698;">Q4 2025</div>
<svg class="r" style="left:268.46px;top:221.36px;" width="5.28" height="5.28" viewBox="0 0 24 24" fill="none" stroke="#1f2937" stroke-width="2.6" stroke-linecap="round" stroke-linejoin="round"><path d="m21 16-4 4-4-4"/><path d="M17 20V4"/><path d="m3 8 4-4 4 4"/><path d="M7 4v16"/></svg>
<div class="t" style="left:269.2px;top:234.5px;font-size:3.5px;color:#94a3b8;transform:rotate(-90deg);">Sales</div>
<div class="r" style="left:446.20px;top:268.80px;width:5.00px;height:5.00px;background:#ff4b12;border-radius:0.5px;"></div>
<div class="t" style="left:453.00px;top:268.93px;font-size:5.2738730004847305px;color:#ff4b12;">Central</div>
<div class="r" style="left:474.20px;top:268.80px;width:5.00px;height:5.00px;background:#ff7a0f;border-radius:0.5px;"></div>
<div class="t" style="left:481.00px;top:269.05px;font-size:4.997657348118069px;color:#ff7a0f;">East</div>
<div class="r" style="left:494.20px;top:268.80px;width:5.00px;height:5.00px;background:#ffad14;border-radius:0.5px;"></div>
<div class="t" style="left:501.00px;top:268.98px;font-size:5.166228175077733px;color:#ffad14;">South</div>
<div class="r" style="left:518.20px;top:268.80px;width:5.00px;height:5.00px;background:#71e35e;border-radius:0.5px;"></div>
<div class="t" style="left:525.00px;top:268.91px;font-size:5.31046881482506px;color:#71e35e;">West</div>
<div class="r" style="left:721.80px;top:144.40px;width:215.60px;height:145.20px;background:#ffffff;border:1px solid #eceef2;box-sizing:border-box;border-radius:4.5px;box-shadow:0 1px 3px rgba(15,23,42,0.06);"></div>
<div class="t" style="left:727.30px;top:150.03px;font-size:5.490319534078388px;font-weight:700;color:#1f2937;">Top Profitable States</div>
<div class="t" style="left:727.30px;top:159.14px;font-size:4.586011377942694px;color:#64748b;">Which states are the most profitable?</div>
<svg class="r" style="left:760px;top:165px" width="176" height="126" viewBox="760 165 176 126" fill="none"><line x1="817" y1="167.5" x2="817" y2="289" stroke="#e9ecf0" stroke-width="0.6" stroke-dasharray="1.2 1.2"/><line x1="854.3" y1="167.5" x2="854.3" y2="289" stroke="#e9ecf0" stroke-width="0.6" stroke-dasharray="1.2 1.2"/><line x1="892.4" y1="167.5" x2="892.4" y2="289" stroke="#e9ecf0" stroke-width="0.6" stroke-dasharray="1.2 1.2"/><line x1="933.2" y1="167.5" x2="933.2" y2="289" stroke="#e9ecf0" stroke-width="0.6" stroke-dasharray="1.2 1.2"/><line x1="779" y1="167.5" x2="779" y2="289" stroke="#e3e7ec" stroke-width="0.7"/><line x1="779" y1="167.5" x2="933" y2="167.5" stroke="#e9ecf0" stroke-width="0.6" stroke-dasharray="1.2 1.2"/><line x1="779" y1="174.75" x2="933" y2="174.75" stroke="#eef0f3" stroke-width="0.6" stroke-dasharray="1.2 1.2"/><line x1="779" y1="189.75" x2="933" y2="189.75" stroke="#eef0f3" stroke-width="0.6" stroke-dasharray="1.2 1.2"/><line x1="779" y1="204.75" x2="933" y2="204.75" stroke="#eef0f3" stroke-width="0.6" stroke-dasharray="1.2 1.2"/><line x1="779" y1="219.75" x2="933" y2="219.75" stroke="#eef0f3" stroke-width="0.6" stroke-dasharray="1.2 1.2"/><line x1="779" y1="234.75" x2="933" y2="234.75" stroke="#eef0f3" stroke-width="0.6" stroke-dasharray="1.2 1.2"/><line x1="779" y1="249.75" x2="933" y2="249.75" stroke="#eef0f3" stroke-width="0.6" stroke-dasharray="1.2 1.2"/><line x1="779" y1="264.75" x2="933" y2="264.75" stroke="#eef0f3" stroke-width="0.6" stroke-dasharray="1.2 1.2"/><line x1="779" y1="279.75" x2="933" y2="279.75" stroke="#eef0f3" stroke-width="0.6" stroke-dasharray="1.2 1.2"/><rect x="817" y="169" width="95.79999999999995" height="11.5" fill="#fc4a14" rx="1"/><rect x="817" y="184" width="92.79999999999995" height="11.5" fill="#fc4a14" rx="1"/><rect x="817" y="199" width="41.799999999999955" height="11.5" fill="#fc4a14" rx="1"/><rect x="817" y="214" width="30.799999999999955" height="11.5" fill="#fc4a14" rx="1"/><rect x="817" y="229" width="23.299999999999955" height="11.5" fill="#fc4a14" rx="1"/><rect x="817" y="244" width="23.0" height="11.5" fill="#fc4a14" rx="1"/><rect x="817" y="259" width="20.299999999999955" height="11.5" fill="#fc4a14" rx="1"/><rect x="817" y="274" width="14.0" height="11.5" fill="#fc4a14" rx="1"/><rect x="817" y="289" width="12.799999999999955" height="11.5" fill="#fc4a14" rx="1"/></svg>
<div class="t" style="left:756.57px;top:173.93px;font-size:4.6px;color:#7b8698;">California</div>
<div class="t" style="left:756.57px;top:188.93px;font-size:4.6px;color:#7b8698;">New York</div>
<div class="t" style="left:751.88px;top:203.93px;font-size:4.6px;color:#7b8698;">Washington</div>
<div class="t" style="left:757.59px;top:218.93px;font-size:4.6px;color:#7b8698;">Michigan</div>
<div class="t" style="left:760.74px;top:233.93px;font-size:4.6px;color:#7b8698;">Virginia</div>
<div class="t" style="left:760.91px;top:248.93px;font-size:4.6px;color:#7b8698;">Indiana</div>
<div class="t" style="left:759.64px;top:263.93px;font-size:4.6px;color:#7b8698;">Georgia</div>
<div class="t" style="left:757.08px;top:278.93px;font-size:4.6px;color:#7b8698;">Kentucky</div>
<div class="r" style="left:887.30px;top:277.20px;width:26.10px;height:9.00px;background:#ffffff;border:1px solid #e5e7eb;box-sizing:border-box;border-radius:3px;"></div>
<div class="t" style="left:890.50px;top:279.63px;font-size:4.6px;font-weight:700;color:#334155;">1–6</div>
<div class="t" style="left:899.00px;top:279.63px;font-size:4.6px;color:#94a3b8;">of</div>
<div class="t" style="left:904.30px;top:279.63px;font-size:4.6px;font-weight:700;color:#334155;">59</div>
<div class="r" style="left:916.40px;top:277.20px;width:18.00px;height:9.00px;background:#ffffff;border:1px solid #e5e7eb;box-sizing:border-box;border-radius:3px;"></div>
<svg class="r" style="left:918.50px;top:279.30px;" width="4.8" height="4.8" viewBox="0 0 24 24" fill="none" stroke="#94a3b8" stroke-width="2.4" stroke-linecap="round" stroke-linejoin="round"><path d="m21 16-4 4-4-4"/><path d="M17 20V4"/><path d="m3 8 4-4 4 4"/><path d="M7 4v16"/></svg>
<div class="t" style="left:924.50px;top:279.63px;font-size:4.6px;color:#94a3b8;">Fit</div>
<div class="r" style="left:722.50px;top:220.80px;width:5.80px;height:13.10px;background:#e6e9ee;border:0.6px solid #c9d0da;box-sizing:border-box;border-radius:3px;"></div>
<svg class="r" style="left:722.31px;top:221.06px;" width="6.17" height="6.17" viewBox="0 0 24 24" fill="none" stroke="#334155" stroke-width="3" stroke-linecap="round" stroke-linejoin="round"><path d="m6 9 6 6 6-6"/></svg>
<div class="r" style="left:725.10px;top:227.00px;width:0.60px;height:5.00px;background:#94a3b8;border-radius:0px;"></div>
<div class="r" style="left:267.30px;top:301.50px;width:215.70px;height:128.10px;background:#ffffff;border:1px solid #eceef2;box-sizing:border-box;border-radius:4.5px;box-shadow:0 1px 3px rgba(15,23,42,0.06);"></div>
<div class="t" style="left:272.00px;top:307.12px;font-size:5.501829257303513px;font-weight:700;color:#1f2937;">Sales by Category</div>
<div class="t" style="left:272.00px;top:316.52px;font-size:4.62864859250026px;color:#64748b;">Which product categories generate the most revenue?</div>
<svg class="r" style="left:268px;top:322px" width="214" height="94" viewBox="268 322 214 94" fill="none"><line x1="289" y1="328.1" x2="479" y2="328.1" stroke="#e6e9ee" stroke-width="0.6" stroke-dasharray="1.2 1.2"/><line x1="289" y1="362.3" x2="479" y2="362.3" stroke="#e6e9ee" stroke-width="0.6" stroke-dasharray="1.2 1.2"/><line x1="289" y1="387" x2="479" y2="387" stroke="#e6e9ee" stroke-width="0.6" stroke-dasharray="1.2 1.2"/><line x1="289" y1="412.2" x2="479" y2="412.2" stroke="#e6e9ee" stroke-width="0.6" stroke-dasharray="1.2 1.2"/><line x1="320.9" y1="325" x2="320.9" y2="412.2" stroke="#e9ecf0" stroke-width="0.6" stroke-dasharray="1.2 1.2"/><line x1="384" y1="325" x2="384" y2="412.2" stroke="#e9ecf0" stroke-width="0.6" stroke-dasharray="1.2 1.2"/><line x1="447.1" y1="325" x2="447.1" y2="412.2" stroke="#e9ecf0" stroke-width="0.6" stroke-dasharray="1.2 1.2"/><line x1="478.7" y1="325" x2="478.7" y2="412.2" stroke="#e9ecf0" stroke-width="0.6" stroke-dasharray="1.2 1.2"/><line x1="289" y1="325" x2="289" y2="412.2" stroke="#e3e7ec" stroke-width="0.7"/><rect x="295.9" y="339" width="50.200000000000045" height="73.19999999999999" fill="#fc4a14" rx="1"/><rect x="358.7" y="337" width="50.400000000000034" height="75.19999999999999" fill="#fc4a14" rx="1"/><rect x="422" y="328.1" width="50.19999999999999" height="84.09999999999997" fill="#fc4a14" rx="1"/></svg>
<div class="t" style="left:270.81px;top:326.62px;font-size:4.4px;color:#7b8698;">$839.9K</div>
<div class="t" style="left:274.48px;top:360.92px;font-size:4.4px;color:#7b8698;">$500K</div>
<div class="t" style="left:274.48px;top:385.62px;font-size:4.4px;color:#7b8698;">$250K</div>
<div class="t" style="left:282.31px;top:410.82px;font-size:4.4px;color:#7b8698;">$0</div>
<div class="t" style="left:305.37px;top:415.13px;font-size:4.6px;color:#7b8698;">Office Supplies</div>
<div class="t" style="left:375.00px;top:415.13px;font-size:4.6px;color:#7b8698;">Furniture</div>
<div class="t" style="left:435.66px;top:415.13px;font-size:4.6px;color:#7b8698;">Technology</div>
<svg class="r" style="left:268.46px;top:370.16px;" width="5.28" height="5.28" viewBox="0 0 24 24" fill="none" stroke="#1f2937" stroke-width="2.6" stroke-linecap="round" stroke-linejoin="round"><path d="m21 16-4 4-4-4"/><path d="M17 20V4"/><path d="m3 8 4-4 4 4"/><path d="M7 4v16"/></svg>
<div class="t" style="left:269.2px;top:384px;font-size:3.5px;color:#94a3b8;transform:rotate(-90deg);">Sales</div>
<div class="r" style="left:494.80px;top:301.50px;width:215.80px;height:128.10px;background:#ffffff;border:1px solid #eceef2;box-sizing:border-box;border-radius:4.5px;box-shadow:0 1px 3px rgba(15,23,42,0.06);"></div>
<div class="t" style="left:499.80px;top:307.06px;font-size:5.653761538636003px;font-weight:700;color:#1f2937;">Profitability by Sub-Category</div>
<div class="t" style="left:499.80px;top:316.51px;font-size:4.639906434151534px;color:#64748b;">Which sub-categories are driving profit or loss?</div>
<svg class="r" style="left:496px;top:322px" width="214" height="94" viewBox="496 322 214 94" fill="none"><line x1="516.6" y1="328.1" x2="706.4" y2="328.1" stroke="#e6e9ee" stroke-width="0.6" stroke-dasharray="1.2 1.2"/><line x1="516.6" y1="366.5" x2="706.4" y2="366.5" stroke="#e6e9ee" stroke-width="0.6" stroke-dasharray="1.2 1.2"/><line x1="516.6" y1="389.5" x2="706.4" y2="389.5" stroke="#e6e9ee" stroke-width="0.6" stroke-dasharray="1.2 1.2"/><line x1="516.6" y1="412.2" x2="706.4" y2="412.2" stroke="#e6e9ee" stroke-width="0.6" stroke-dasharray="1.2 1.2"/><line x1="555.9" y1="325" x2="555.9" y2="412.2" stroke="#e9ecf0" stroke-width="0.6" stroke-dasharray="1.2 1.2"/><line x1="594.6" y1="325" x2="594.6" y2="412.2" stroke="#e9ecf0" stroke-width="0.6" stroke-dasharray="1.2 1.2"/><line x1="633.3" y1="325" x2="633.3" y2="412.2" stroke="#e9ecf0" stroke-width="0.6" stroke-dasharray="1.2 1.2"/><line x1="672" y1="325" x2="672" y2="412.2" stroke="#e9ecf0" stroke-width="0.6" stroke-dasharray="1.2 1.2"/><line x1="706.4" y1="325" x2="706.4" y2="412.2" stroke="#e9ecf0" stroke-width="0.6" stroke-dasharray="1.2 1.2"/><line x1="516.8" y1="325" x2="516.8" y2="412.2" stroke="#e3e7ec" stroke-width="0.7"/><rect x="518.00" y="352.5" width="8.4" height="39.20" fill="#22c55e" rx="0.8"/><rect x="529.16" y="356.1" width="8.4" height="35.60" fill="#22c55e" rx="0.8"/><rect x="540.32" y="385.6" width="8.4" height="6.10" fill="#22c55e" rx="0.8"/><rect x="551.48" y="367.9" width="8.4" height="23.80" fill="#22c55e" rx="0.8"/><rect x="562.64" y="384.1" width="8.4" height="7.60" fill="#22c55e" rx="0.8"/><rect x="573.80" y="360.9" width="8.4" height="30.80" fill="#22c55e" rx="0.8"/><rect x="584.96" y="389.2" width="8.4" height="2.50" fill="#22c55e" rx="0.8"/><rect x="596.12" y="340.7" width="8.4" height="51.00" fill="#22c55e" rx="0.8"/><rect x="607.28" y="376.3" width="8.4" height="15.40" fill="#22c55e" rx="0.8"/><rect x="618.44" y="344.0" width="8.4" height="47.70" fill="#22c55e" rx="0.8"/><rect x="629.60" y="391.7" width="8.4" height="4.20" fill="#ef4444" rx="0.8"/><rect x="640.76" y="384.1" width="8.4" height="7.60" fill="#22c55e" rx="0.8"/><rect x="651.92" y="370.7" width="8.4" height="21.00" fill="#22c55e" rx="0.8"/><rect x="663.08" y="391.7" width="8.4" height="20.50" fill="#ef4444" rx="0.8"/><rect x="674.24" y="391.7" width="8.4" height="2.00" fill="#ef4444" rx="0.8"/><rect x="685.40" y="388.1" width="8.4" height="3.60" fill="#22c55e" rx="0.8"/><rect x="696.56" y="328.1" width="8.4" height="63.60" fill="#22c55e" rx="0.8"/></svg>
<div class="t" style="left:500.56px;top:326.62px;font-size:4.4px;color:#7b8698;">$56.9K</div>
<div class="t" style="left:500.56px;top:365.12px;font-size:4.4px;color:#7b8698;">$22.2K</div>
<div class="t" style="left:503.00px;top:388.12px;font-size:4.4px;color:#7b8698;">$2.2K</div>
<div class="t" style="left:499.09px;top:410.82px;font-size:4.4px;color:#7b8698;">$-17.8K</div>
<div class="t" style="left:516.36px;top:415.13px;font-size:4.6px;color:#7b8698;">Paper</div>
<div class="t" style="left:537.92px;top:415.13px;font-size:4.6px;color:#7b8698;">Labels</div>
<div class="t" style="left:564.26px;top:415.13px;font-size:4.6px;color:#7b8698;">Art</div>
<div class="t" style="left:571.55px;top:415.13px;font-size:4.6px;color:#7b8698;">Chairs</div>
<div class="t" style="left:592.70px;top:415.13px;font-size:4.6px;color:#7b8698;">Phones</div>
<div class="t" style="left:622.55px;top:415.13px;font-size:4.6px;color:#7b8698;">Bookcases</div>
<div class="t" style="left:644.75px;top:415.13px;font-size:4.6px;color:#7b8698;">Appliances</div>
<div class="t" style="left:669.68px;top:415.13px;font-size:4.6px;color:#7b8698;">Supplies</div>
<div class="t" style="left:692.08px;top:415.13px;font-size:4.6px;color:#7b8698;">Copiers</div>
<div class="r" style="left:683.20px;top:418.20px;width:24.30px;height:7.10px;background:#ffffff;border:0.7px solid #e5e7eb;box-sizing:border-box;border-radius:3px;box-shadow:0 1px 2px rgba(0,0,0,0.06);"></div>
<svg class="r" style="left:685.90px;top:419.30px;" width="4.8" height="4.8" viewBox="0 0 24 24" fill="none" stroke="#64748b" stroke-width="2.6" stroke-linecap="round" stroke-linejoin="round"><path d="M8 3H5a2 2 0 0 0-2 2v3"/><path d="M21 8V5a2 2 0 0 0-2-2h-3"/><path d="M3 16v3a2 2 0 0 0 2 2h3"/><path d="M16 21h3a2 2 0 0 0 2-2v-3"/></svg>
<div class="t" style="left:692.80px;top:419.93px;font-size:4.599137661688434px;color:#64748b;">Scroll</div>
<svg class="r" style="left:495.96px;top:370.16px;" width="5.28" height="5.28" viewBox="0 0 24 24" fill="none" stroke="#1f2937" stroke-width="2.6" stroke-linecap="round" stroke-linejoin="round"><path d="m21 16-4 4-4-4"/><path d="M17 20V4"/><path d="m3 8 4-4 4 4"/><path d="M7 4v16"/></svg>
<div class="t" style="left:496.7px;top:384px;font-size:3.5px;color:#94a3b8;transform:rotate(-90deg);">Profit</div>
<div class="r" style="left:722.30px;top:301.50px;width:215.10px;height:128.10px;background:#ffffff;border:1px solid #eceef2;box-sizing:border-box;border-radius:4.5px;box-shadow:0 1px 3px rgba(15,23,42,0.06);"></div>
<div class="t" style="left:726.80px;top:307.11px;font-size:5.5265937845473525px;font-weight:700;color:#1f2937;">Distribution of Ship Modes</div>
<div class="t" style="left:726.80px;top:316.50px;font-size:4.6697902924987496px;color:#64748b;">What is the distribution of ship modes?</div>
<svg class="r" style="left:790px;top:330px" width="80" height="82" viewBox="790 330 80 82" fill="none"><defs><filter id="sh" x="-50%" y="-50%" width="200%" height="200%"><feGaussianBlur in="SourceAlpha" stdDeviation="2.5"/><feOffset dx="0" dy="2"/><feComponentTransfer><feFuncA type="linear" slope="0.35"/></feComponentTransfer><feMerge><feMergeNode/><feMergeNode in="SourceGraphic"/></feMerge></filter></defs><path d="M830,370.1L806.47,387.39A29.2,29.2 0 1 1 859.20,370.10Z" fill="#fcc1ae"/><path d="M830,370.1L859.20,370.10A29.2,29.2 0 0 1 857.54,379.80Z" fill="#d6f5cc"/><path d="M830,370.1L857.54,379.80A29.2,29.2 0 0 1 829.80,399.30Z" fill="#fde0b4"/><path d="M830,370.1L829.78,401.10A31.0,31.0 0 0 1 805.02,388.45Z" fill="#ff7206" filter="url(#sh)"/></svg>
<div class="r" style="left:805.30px;top:410.00px;width:55.50px;height:7.00px;background:#f1f3f6;border-radius:2px;"></div>
<div class="r" style="left:737.50px;top:411.90px;width:3.6px;height:3.6px;border-radius:50%;background:#fcc1ae;"></div>
<div class="t" style="left:742.60px;top:411.45px;font-size:5px;color:#cbd5e1;transform:scaleX(0.9478);">Standard Class</div>
<div class="t" style="left:776.10px;top:411.45px;font-size:5px;font-weight:700;color:#9ca3af;transform:scaleX(0.7196);">6.1K</div>
<div class="t" style="left:786.50px;top:411.82px;font-size:4.4px;color:#d1d5db;transform:scaleX(0.8179);">(60.1%)</div>
<div class="r" style="left:808.00px;top:411.90px;width:3.6px;height:3.6px;border-radius:50%;background:#ff7206;"></div>
<div class="t" style="left:813.10px;top:411.45px;font-size:5px;color:#475569;transform:scaleX(0.9657);">First Class</div>
<div class="t" style="left:836.40px;top:411.45px;font-size:5px;font-weight:700;color:#1f2937;transform:scaleX(0.7954);">1.5K</div>
<div class="t" style="left:846.80px;top:411.82px;font-size:4.4px;color:#64748b;transform:scaleX(0.8179);">(15.2%)</div>
<div class="r" style="left:867.40px;top:411.90px;width:3.6px;height:3.6px;border-radius:50%;background:#fde0b4;"></div>
<div class="t" style="left:872.50px;top:411.45px;font-size:5px;color:#cbd5e1;transform:scaleX(0.9304);">Second Class</div>
<div class="t" style="left:902.80px;top:411.45px;font-size:5px;font-weight:700;color:#9ca3af;transform:scaleX(0.8762);">2K</div>
<div class="t" style="left:910.40px;top:411.82px;font-size:4.4px;color:#d1d5db;transform:scaleX(0.7854);">(19.4%)</div>
<div class="r" style="left:805.70px;top:420.60px;width:3.6px;height:3.6px;border-radius:50%;background:#d6f5cc;"></div>
<div class="t" style="left:810.80px;top:420.15px;font-size:5px;color:#cbd5e1;transform:scaleX(0.7840);">Same Day</div>
<div class="t" style="left:833.60px;top:420.15px;font-size:5px;font-weight:700;color:#9ca3af;transform:scaleX(0.9711);">547</div>
<div class="t" style="left:843.40px;top:420.52px;font-size:4.4px;color:#d1d5db;transform:scaleX(0.8643);">(5.4%)</div>
<div class="t" style="left:253.00px;top:500.10px;font-size:9.343958083178693px;color:#64748b;-webkit-text-stroke:0.25px #64748b;">Dashboard 1</div>
<div class="r" style="left:318.70px;top:493.70px;width:99.40px;height:20.50px;background:#f9fafb;border:1px solid #e1e5eb;box-sizing:border-box;border-radius:6px;"></div>
<div class="t" style="left:326.70px;top:499.48px;font-size:9.59419885650537px;color:#1f2937;-webkit-text-stroke:0.25px #1f2937;">E-Commerce...</div>
<svg class="r" style="left:426.45px;top:498.95px;" width="10.5" height="10.5" viewBox="0 0 24 24" fill="none" stroke="#1f2937" stroke-width="2.4" stroke-linecap="round" stroke-linejoin="round"><path d="M5 12h14"/><path d="M12 5v14"/></svg>
</div></body></html>
